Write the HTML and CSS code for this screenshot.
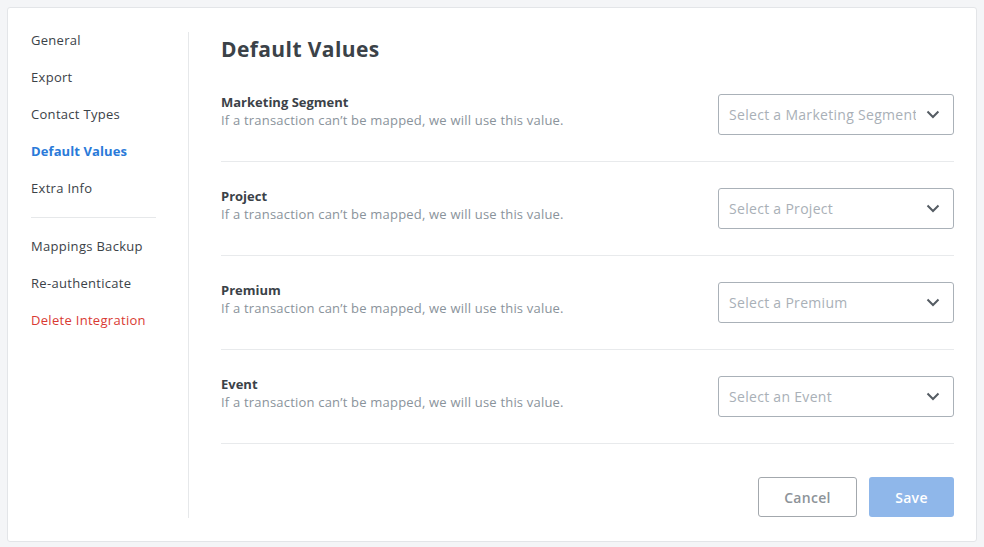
FILE: index.html
```html
<!DOCTYPE html>
<html lang="en">
<head>
  <meta charset="UTF-8" />
  <title>Default Values</title>
  <link rel="stylesheet" href="styles.css">
</head>
<body>

  <div class="card">
    <nav class="sidebar">
      <a class="nav-item">General</a>
      <a class="nav-item">Export</a>
      <a class="nav-item">Contact Types</a>
      <a class="nav-item active">Default Values</a>
      <a class="nav-item">Extra Info</a>
      <div class="nav-divider"></div>
      <a class="nav-item">Mappings Backup</a>
      <a class="nav-item">Re-authenticate</a>
      <a class="nav-item danger">Delete Integration</a>
    </nav>

    <main class="content">
      <h1>Default Values</h1>

      <div class="field-row">
        <div class="field-info">
          <strong>Marketing Segment</strong>
          <p>If a transaction can’t be mapped, we will use this value.</p>
        </div>
        <div class="select">
          <span class="placeholder">Select a Marketing Segment</span>
          <svg class="chevron" width="14" height="9" viewBox="0 0 14 9"><path d="M1.5 1.5 L7 7 L12.5 1.5" /></svg>
        </div>
      </div>

      <div class="field-row">
        <div class="field-info">
          <strong>Project</strong>
          <p>If a transaction can’t be mapped, we will use this value.</p>
        </div>
        <div class="select">
          <span class="placeholder">Select a Project</span>
          <svg class="chevron" width="14" height="9" viewBox="0 0 14 9"><path d="M1.5 1.5 L7 7 L12.5 1.5" /></svg>
        </div>
      </div>

      <div class="field-row">
        <div class="field-info">
          <strong>Premium</strong>
          <p>If a transaction can’t be mapped, we will use this value.</p>
        </div>
        <div class="select">
          <span class="placeholder">Select a Premium</span>
          <svg class="chevron" width="14" height="9" viewBox="0 0 14 9"><path d="M1.5 1.5 L7 7 L12.5 1.5" /></svg>
        </div>
      </div>

      <div class="field-row">
        <div class="field-info">
          <strong>Event</strong>
          <p>If a transaction can’t be mapped, we will use this value.</p>
        </div>
        <div class="select">
          <span class="placeholder">Select an Event</span>
          <svg class="chevron" width="14" height="9" viewBox="0 0 14 9"><path d="M1.5 1.5 L7 7 L12.5 1.5" /></svg>
        </div>
      </div>

      <div class="actions">
        <button class="btn btn-cancel">Cancel</button>
        <button class="btn btn-save" disabled>Save</button>
      </div>
    </main>
  </div>

</body>
</html>
```

FILE: styles.css
```css
body {
  font-family: "Open Sans", Arial, sans-serif;
  background: #f4f5f7;
  color: #3b4248;
  margin: 0;
  padding: 7px 7px 5px 7px;
}

.card {
  display: flex;
  background: #fff;
  border: 1px solid #e3e5e8;
  border-radius: 3px;
  height: 535px;
  box-sizing: border-box;
  padding: 24px 22px 23px 23px;
}

.sidebar {
  width: 157px;
  flex-shrink: 0;
  border-right: 1px solid #e6e8ea;
  display: flex;
  flex-direction: column;
}

.nav-item {
  display: block;
  font-size: 13px;
  letter-spacing: 0.3px;
  line-height: 17px;
  margin-bottom: 20px;
  color: #3b4248;
  cursor: pointer;
}

.nav-item.active {
  color: #2a7ad9;
  font-weight: 700;
  letter-spacing: 0.1px;
}

.nav-item.danger {
  color: #d93a33;
}

.nav-divider {
  width: 125px;
  height: 1px;
  background: #e6e8ea;
  margin: 0 0 20px;
}

.content {
  flex-grow: 1;
  padding-left: 32px;
  display: flex;
  flex-direction: column;
}

.content h1 {
  font-size: 21px;
  font-weight: 700;
  letter-spacing: 0.4px;
  margin: 3px 0 5px;
  line-height: 28px;
}

.field-row {
  display: flex;
  justify-content: space-between;
  align-items: flex-start;
  padding: 26px 0;
  border-bottom: 1px solid #e8eaec;
}

.field-info {
  margin-top: -1px;
}

.field-info strong {
  display: block;
  font-size: 13px;
  line-height: 18px;
}

.field-info p {
  margin: 0;
  font-size: 13px;
  letter-spacing: 0.2px;
  line-height: 18px;
  color: #8a939b;
}

.select {
  width: 236px;
  height: 41px;
  box-sizing: border-box;
  border: 1px solid #aab1b8;
  border-radius: 3px;
  display: flex;
  align-items: center;
  padding: 0 13px 0 10px;
}

.placeholder {
  flex-grow: 1;
  font-size: 14px;
  letter-spacing: 0.3px;
  color: #a9b0b7;
  white-space: nowrap;
  overflow: hidden;
  margin-right: 10px;
}

.chevron path {
  fill: none;
  stroke: #555c63;
  stroke-width: 2;
}

.actions {
  display: flex;
  justify-content: flex-end;
  gap: 12px;
  margin-top: 33px;
}

.btn {
  font-family: inherit;
  font-size: 14px;
  font-weight: 600;
  letter-spacing: 0.3px;
  height: 40px;
  border-radius: 3px;
  cursor: pointer;
}

.btn-cancel {
  width: 99px;
  background: #fff;
  border: 1px solid #a3a8ad;
  color: #8d9399;
}

.btn-save {
  width: 85px;
  background: #8fb7ea;
  border: none;
  color: #fff;
}
```
